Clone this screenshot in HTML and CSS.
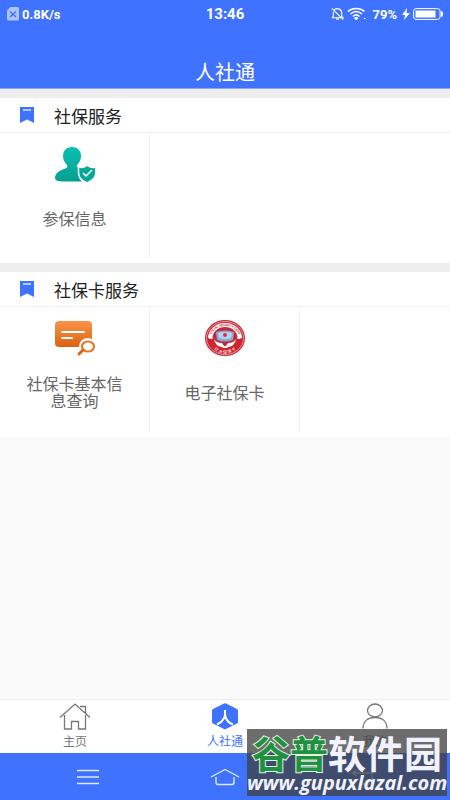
FILE: index.html
```html
<!DOCTYPE html>
<html lang="zh-CN">
<head>
    <meta charset="UTF-8">
    <meta name="viewport" content="width=device-width, initial-scale=1.0">
    <title>人社通</title>
    <link rel="stylesheet" href="styles.css">
</head>
<body>
    <header class="header">
        <div class="status">
            <div class="status-left">
                <svg width="12" height="14" viewBox="0 0 12 14">
                    <path d="M3.5 0H10.5Q12 0 12 1.5V12Q12 13.500 10.500 13.500H1.500Q0 13.500 0 12V3.500Z" fill="#adc4ff"/>
                    <path d="M3 4.500L9 10M9 4.500L3 10" stroke="#3f72ff" stroke-width="1.500"/>
                </svg>
                <span>0.8K/s</span>
            </div>
            <div class="clock">13:46</div>
            <div class="status-right">
                <svg width="13" height="14" viewBox="0 0 14 14" fill="none" stroke="#fff" stroke-width="1.200">
                    <path d="M1 11H13L11.500 9.500V5.500C11.500 3.500 10 2 8 1.500C6.500 1 4.500 1.500 3.500 2.500M2.500 4.500V9.500L1 11M1 1L13 13M5.500 12.500H8.500"/>
                </svg>
                <svg width="20" height="14" viewBox="0 0 20 14" fill="none" stroke="#fff" stroke-width="1.600">
                    <path d="M1 4.500C5.500 .5 13 .5 17.500 4.500M3.500 7C7 4 11.500 4 15 7M6 9.500C8 7.500 10.500 7.500 12.500 9.500"/>
                    <path d="M7.500 11L9.250 13L11 11Q9.250 9.500 7.500 11ZM17 11.500h1.500" fill="#fff" stroke-width="1"/>
                </svg>
                <span class="percent">79%</span>
                <svg width="8" height="12" viewBox="0 0 8 12"><path d="M5 0L0 7H3L2 12L8 5H4.500Z" fill="#fff"/></svg>
                <svg width="30" height="12" viewBox="0 0 30 12">
                    <rect x=".6" y=".6" width="26.500" height="10.800" rx="2.500" fill="none" stroke="#fff" stroke-width="1"/>
                    <rect x="2.500" y="2.500" width="20" height="7" fill="#fff"/>
                    <path d="M28 3Q30 3 30 6T28 9Z" fill="#fff"/>
                </svg>
            </div>
        </div>
        <h1 class="title">人社通</h1>
    </header>

    <main class="content">
        <section class="card">
            <h2 class="card-title">
                <svg width="14" height="16" viewBox="0 0 14 16"><path d="M0 0H14V16L7 12.500L0 16Z" fill="#3f72ff"/><path d="M3 3H11" stroke="#fff" stroke-width="1.200"/></svg>
                社保服务
            </h2>
            <div class="grid">
                <a class="item" href="#">
                    <svg width="42" height="40" viewBox="0 0 42 40">
                        <defs>
                            <linearGradient id="teal" x1="0" y1="0" x2="0" y2="1"><stop offset="0" stop-color="#09c0b1"/><stop offset="1" stop-color="#079f91"/></linearGradient>
                        </defs>
                        <path d="M18 2C12 2 9 6 9 11C9 15 11 18 13 20C14 22 13 23 10 24C4 26 1 29 1 33Q1 36.500 9 36.500H29C26 34 25 30 25 26L27 23C23 22 22 22 23 20C26 17 27 14 27 11C27 6 24 2 18 2Z" fill="url(#teal)"/>
                        <path d="M33 21Q37 24 41 23V28Q41 34 33 37Q25 34 25 28V23Q30 24 33 21Z" fill="#08a799"/>
                        <path d="M29 28L32 31L38 25" fill="none" stroke="#fff" stroke-width="1.500"/>
                        <path d="M24.500 22V28Q25 34 30 37" fill="none" stroke="#fff" stroke-width="1.500"/>
                    </svg>
                    <span class="label">参保信息</span>
                </a>
            </div>
        </section>

        <section class="card">
            <h2 class="card-title">
                <svg width="14" height="16" viewBox="0 0 14 16"><path d="M0 0H14V16L7 12.500L0 16Z" fill="#3f72ff"/><path d="M3 3H11" stroke="#fff" stroke-width="1.200"/></svg>
                社保卡服务
            </h2>
            <div class="grid">
                <a class="item" href="#">
                    <svg width="42" height="40" viewBox="0 0 42 40">
                        <defs>
                            <linearGradient id="orange" x1="0" y1="0" x2="0" y2="1"><stop offset="0" stop-color="#f99447"/><stop offset="1" stop-color="#dc6210"/></linearGradient>
                        </defs>
                        <rect x="1" y="2" width="37" height="26" rx="4" fill="url(#orange)"/>
                        <path d="M8 13H30M8 19H18" stroke="#fff" stroke-width="2" stroke-linecap="round"/>
                        <circle cx="33.500" cy="27.500" r="8.500" fill="#fff"/>
                        <ellipse cx="34" cy="27.500" rx="6" ry="5" fill="#fff" stroke="#e7762d" stroke-width="2.200"/>
                        <path d="M29 31L25 35" stroke="#dc6210" stroke-width="3" stroke-linecap="round"/>
                    </svg>
                    <span class="label">社保卡基本信息查询</span>
                </a>
                <a class="item" href="#">
                    <svg width="42" height="40" viewBox="0 0 42 40">
                        <defs>
                            <path id="arc-top" d="M6.500 20A14.500 13 0 0 1 35.500 20"/>
                            <path id="arc-bottom" d="M5 19A16 15.500 0 0 0 37 19"/>
                        </defs>
                        <ellipse cx="21" cy="19" rx="20" ry="18" fill="#ca2733"/>
                        <ellipse cx="21" cy="19" rx="18.500" ry="16.500" fill="none" stroke="#f0bec2" stroke-width=".7"/>
                        <path d="M4 19A17 15 0 0 1 38 19L35 20H7Z" fill="#fff"/>
                        <ellipse cx="21" cy="19" rx="12.500" ry="11" fill="#ca2733"/>
                        <path d="M12 13Q21 10 30 13L29 21Q21 24 13 21Z" fill="#83add9"/>
                        <path d="M14 14Q21 12 28 14L27 19Q21 21 15 19Z" fill="#b7d3ef"/>
                        <circle cx="21" cy="16" r="2" fill="#d33341"/>
                        <path d="M10 20Q12 24 18 24L20 27H22L24 24Q30 24 32 20Q31 27 24 28L23 29H19L18 28Q11 27 10 20Z" fill="#fff"/>
                        <text class="seal-en"><textPath href="#arc-top" startOffset="50%" text-anchor="middle">SOCIAL SECURITY CARD</textPath></text>
                        <text class="seal-cn"><textPath href="#arc-bottom" startOffset="50%" text-anchor="middle">社 会 保 障 卡</textPath></text>
                    </svg>
                    <span class="label">电子社保卡</span>
                </a>
                <div class="item"></div>
            </div>
        </section>
    </main>

    <footer class="footer">
        <nav class="tabs">
            <a class="tab" href="#">
                <svg width="32" height="28" viewBox="0 0 32 28" fill="none" stroke="#777" stroke-width="1.300">
                    <path d="M1 14.500L16 1L31 14.500M5.500 12V26H12.500V18.500H19.500V26H26.500V12M21 3.500H26.500V10"/>
                </svg>
                <span>主页</span>
            </a>
            <a class="tab active" href="#">
                <svg width="32" height="28" viewBox="0 0 32 28">
                    <path d="M15 .5Q16 0 17 .5L28 6Q29 6.500 29 8V19Q29 20 28 20.500L17 26Q16 26.500 15 26L4 20.500Q3 20 3 19V8Q3 6.500 4 6Z" fill="#3f72ff"/>
                    <path d="M16 7C17 14 14 19 8 21.500M16 12C17 17 19 20 24 21.500" fill="none" stroke="#fff" stroke-width="2"/>
                </svg>
                <span>人社通</span>
            </a>
            <a class="tab" href="#">
                <svg width="32" height="28" viewBox="0 0 32 28" fill="none" stroke="#777" stroke-width="1.300">
                    <ellipse cx="16" cy="7.500" rx="7.500" ry="6.500"/>
                    <path d="M4 25.500C4 18 9 14.500 16 14.500S28 18 28 25.500"/>
                </svg>
                <span>我的</span>
            </a>
        </nav>
        <div class="keys">
            <button class="key" aria-label="菜单">
                <svg width="22" height="16" viewBox="0 0 22 16" stroke="#dfe8ff" stroke-width="1.300"><path d="M0 1.500H22M0 8H22M0 14.500H22"/></svg>
            </button>
            <button class="key" aria-label="主屏幕">
                <svg width="30" height="18" viewBox="0 0 30 18" fill="none" stroke="#dfe8ff" stroke-width="1.400"><path d="M1 9L15 1.500L29 9M6 9V14Q6 16.500 8 16.500H22Q24 16.500 24 14V9"/></svg>
            </button>
            <button class="key" aria-label="返回">
                <svg width="22" height="16" viewBox="0 0 22 16" fill="none" stroke="#dfe8ff" stroke-width="1.300"><path d="M6 1L1 4L6 7M1 4H21V15H8"/></svg>
            </button>
        </div>
        <div class="watermark">
            <div class="mark-name"><span class="green">谷普</span>软件园</div>
            <div class="mark-url">www.gupuxlazal.com</div>
        </div>
    </footer>
</body>
</html>
```
FILE: styles.css
```css
*{
    box-sizing: border-box;
}
body{
    margin: 0;
    min-height: 100vh;
    display: flex;
    flex-direction: column;
    background-color: #fafafa;
    font-family: Roboto, "Noto Sans CJK SC", sans-serif;
}
a{
    color: inherit;
    text-decoration: none;
}
svg{
    display: block;
    flex-shrink: 0;
}

.header{
    background-color: #3f72ff;
    color: white;
    border-bottom: 1px solid #8ba8f5;
}
.status{
    display: grid;
    grid-template-columns: 1fr auto 1fr;
    align-items: center;
    height: 28px;
    padding: 0 7px;
    font-size: 13px;
    font-weight: bold;
}
.status-left, .status-right{
    display: flex;
    align-items: center;
    gap: 3px;
}
.status-right{
    justify-content: flex-end;
}
.percent{
    margin: 0 2px;
}
.clock{
    font-size: 15px;
}
.title{
    margin: 0;
    padding: 30px 0 0;
    font-size: 20px;
    line-height: 30px;
    font-weight: normal;
    text-align: center;
}

.content{
    flex: 1;
}
.card{
    border-top: 9px solid #eee;
    background-color: white;
}
.card-title{
    display: flex;
    align-items: center;
    gap: 20px;
    height: 35px;
    margin: 0;
    padding: 0 20px;
    border-bottom: 1px solid #f0f0f0;
    font-size: 17px;
    font-weight: normal;
    color: #222;
}
.grid{
    display: grid;
    grid-template-columns: repeat(3, 1fr);
    padding-bottom: 5px;
}
.item{
    display: flex;
    flex-direction: column;
    align-items: center;
    min-height: 125px;
    padding: 12px 24px 0;
    border-right: 1px solid #f0f0f0;
}
.item:nth-child(3){
    border-right: 0;
}
.label{
    display: flex;
    align-items: center;
    height: 50px;
    margin-top: 9px;
    font-size: 16px;
    line-height: 17px;
    text-align: center;
    color: #666;
}
.seal-en{
    font-size: 3px;
    font-weight: bold;
    fill: #ca2733;
}
.seal-cn{
    font-size: 4px;
    fill: white;
}

.footer{
    position: relative;
}
.tabs{
    display: grid;
    grid-template-columns: repeat(3, 1fr);
    background-color: white;
    border-top: 1px solid #eee;
}
.tab{
    display: flex;
    flex-direction: column;
    align-items: center;
    padding-top: 3px;
    font-size: 12px;
    line-height: 22px;
    color: #777;
}
.tab.active{
    color: #3f72ff;
}
.keys{
    display: flex;
    justify-content: space-between;
    height: 47px;
    padding: 0 60px;
    background-color: #3f72ff;
}
.key{
    display: flex;
    justify-content: center;
    align-items: center;
    width: 56px;
    padding: 0;
    border: 0;
    background: none;
}

.watermark{
    position: absolute;
    right: 3px;
    bottom: 4px;
    width: 200px;
    height: 67px;
    padding-top: 3px;
    background-color: rgba(65, 65, 65, 0.77);
    color: #f0f3ff;
    text-align: center;
    white-space: nowrap;
}
.mark-name{
    font-family: "Noto Sans CJK SC", sans-serif;
    font-size: 38px;
    line-height: 39px;
    font-weight: bold;
}
.green{
    color: #1f9142;
    -webkit-text-stroke: 2px #e4f3de;
    paint-order: stroke fill;
}
.mark-url{
    font-family: "Open Sans", sans-serif;
    font-size: 20px;
    line-height: 24px;
    font-weight: bold;
    font-style: italic;
}
```
